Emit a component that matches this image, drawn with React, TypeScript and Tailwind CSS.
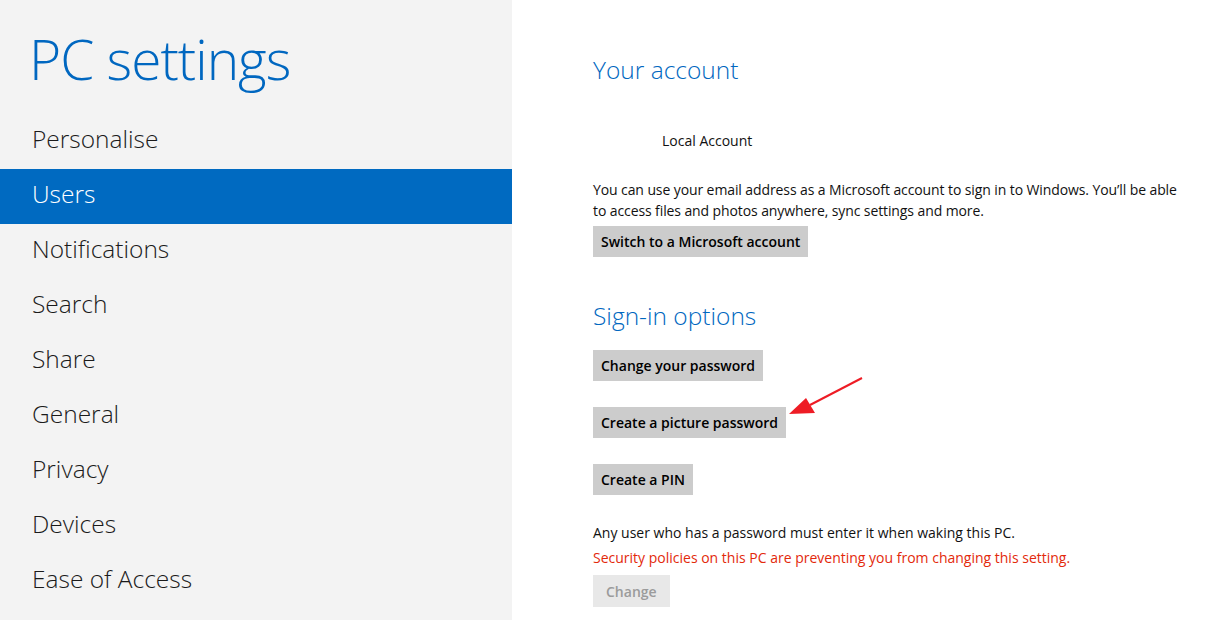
const navItems = [
  "Personalise",
  "Users",
  "Notifications",
  "Search",
  "Share",
  "General",
  "Privacy",
  "Devices",
  "Ease of Access",
];

function Btn({ label, disabled }: { label: string; disabled?: boolean }) {
  return (
    <button
      className={
        disabled
          ? "h-[32px] px-[13px] bg-[#e8e8e8] text-[#9b9b9b] text-[14px] font-semibold"
          : "h-[31px] px-[8px] bg-[#cccccc] text-black text-[14px] font-semibold"
      }
    >
      {label}
    </button>
  );
}

export default function App() {
  return (
    <main
      className="flex h-[620px] w-full overflow-hidden bg-white"
      style={{ fontFamily: '"Open Sans", "Noto Sans", sans-serif' }}
    >
      {/* left navigation */}
      <aside className="w-[512px] shrink-0 bg-[#f3f3f3] pt-[24px]">
        <h1 className="pl-[29px] text-[55px] leading-[70px] font-light text-[#0067c0] tracking-[-1px]">
          PC settings
        </h1>
        <nav className="mt-[20px]">
          {navItems.map((item) => (
            <div
              key={item}
              className={
                item === "Users"
                  ? "h-[55px] flex items-center pl-[32px] pb-[4px] bg-[#006ac1] text-white text-[24.5px] font-light"
                  : "h-[55px] flex items-center pl-[32px] pb-[4px] text-[#1a1a1a] text-[24.5px] font-light"
              }
            >
              {item}
            </div>
          ))}
        </nav>
      </aside>

      {/* right content */}
      <section className="relative flex-1 pl-[81px] pt-[53px] text-[14px] text-[#111]">
        <h2 className="text-[24.5px] leading-[34px] font-light text-[#0067c0]">Your account</h2>
        <div className="mt-[44px] ml-[69px] leading-[20px]">Local Account</div>
        <p className="mt-[28px] leading-[21px] max-w-[600px] tracking-[-0.1px]">
          You can use your email address as a Microsoft account to sign in to Windows. You’ll be able
          to access files and photos anywhere, sync settings and more.
        </p>
        <div className="mt-[5px]">
          <Btn label="Switch to a Microsoft account" />
        </div>

        <h2 className="mt-[42px] text-[24.5px] leading-[34px] font-light text-[#0067c0]">Sign-in options</h2>
        <div className="mt-[17px] flex flex-col items-start gap-[26px]">
          <Btn label="Change your password" />
          <Btn label="Create a picture password" />
          <Btn label="Create a PIN" />
        </div>

        <p className="mt-[27px] leading-[21px]">Any user who has a password must enter it when waking this PC.</p>
        <p className="mt-[4px] leading-[21px] text-[#e3290b]">
          Security policies on this PC are preventing you from changing this setting.
        </p>
        <div className="mt-[7px]">
          <Btn label="Change" disabled />
        </div>

        {/* annotation arrow */}
        <svg
          className="absolute left-[270px] top-[370px]"
          width="100"
          height="50"
          viewBox="0 0 100 50"
        >
          <line x1="80" y1="8" x2="28" y2="35" stroke="#ee1c25" strokeWidth="2" />
          <polygon points="7,44 24,28 33,43" fill="#ee1c25" />
        </svg>
      </section>
    </main>
  );
}
